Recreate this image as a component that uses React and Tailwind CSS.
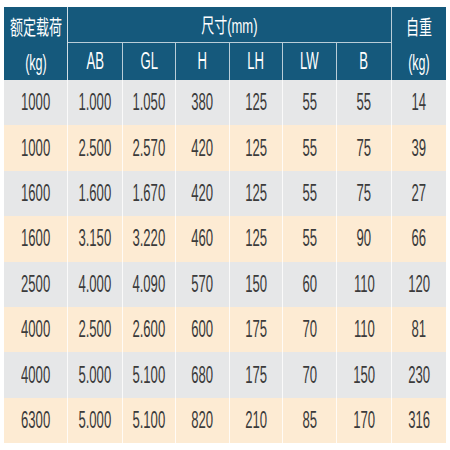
import React from "react";

const rows = [
  ["1000", "1.000", "1.050", "380", "125", "55", "55", "14"],
  ["1000", "2.500", "2.570", "420", "125", "55", "75", "39"],
  ["1600", "1.600", "1.670", "420", "125", "55", "75", "27"],
  ["1600", "3.150", "3.220", "460", "125", "55", "90", "66"],
  ["2500", "4.000", "4.090", "570", "150", "60", "110", "120"],
  ["4000", "2.500", "2.600", "600", "175", "70", "110", "81"],
  ["4000", "5.000", "5.100", "680", "175", "70", "150", "230"],
  ["6300", "5.000", "5.100", "820", "210", "85", "170", "316"],
];

const subs = ["AB", "GL", "H", "LH", "LW", "B"];

function Num({ children, className = "" }) {
  return (
    <span className={"inline-block whitespace-nowrap scale-x-[0.57] " + className}>
      {children}
    </span>
  );
}

function Cjk({ children }) {
  return (
    <span className="inline-block whitespace-nowrap text-[20px] leading-none scale-x-[0.65]">
      {children}
    </span>
  );
}

export default function App() {
  return (
    <div
      className="w-[450px] h-[450px] bg-white pl-[4px] pt-[7px]"
      style={{ fontFamily: '"Liberation Sans", "Noto Sans CJK SC", sans-serif' }}
    >
      <div className="grid w-[442px] grid-cols-[64px_55px_53px_54px_53px_54px_55px_54px] grid-rows-[36px_37px_repeat(8,45.4px)]">
        <div className="row-span-2 bg-[#15597c] border-r border-white/80 flex flex-col text-white">
          <div className="h-[38px] flex items-center justify-center pt-[4px]">
            <Cjk>额定载荷</Cjk>
          </div>
          <div className="flex-1 flex items-center justify-center">
            <Num className="text-[22px] leading-none scale-x-[0.55]">(kg)</Num>
          </div>
        </div>
        <div className="col-span-6 bg-[#15597c] border-r border-b border-white/70 flex items-center justify-center text-white pt-[2px]">
          <Cjk>尺寸(mm)</Cjk>
        </div>
        <div className="row-span-2 bg-[#15597c] flex flex-col text-white">
          <div className="h-[38px] flex items-center justify-center pt-[4px]">
            <Cjk>自重</Cjk>
          </div>
          <div className="flex-1 flex items-center justify-center">
            <Num className="text-[22px] leading-none scale-x-[0.55]">(kg)</Num>
          </div>
        </div>
        {subs.map((s) => (
          <div
            key={s}
            className="bg-[#15597c] border-r border-white/70 flex items-center justify-center text-white"
          >
            <Num className="text-[23px] leading-none">{s}</Num>
          </div>
        ))}
        {rows.map((r, i) =>
          r.map((c, j) => (
            <div
              key={i + "-" + j}
              className={
                "flex items-center justify-center text-[#3b3b3b] " +
                (i % 2 === 0 ? "bg-[#e6e7e8] " : "bg-[#fdebd3] ") +
                (j < 7 ? "border-r border-white/80" : "")
              }
            >
              <Num className="text-[23px] leading-none">{c}</Num>
            </div>
          ))
        )}
      </div>
    </div>
  );
}
